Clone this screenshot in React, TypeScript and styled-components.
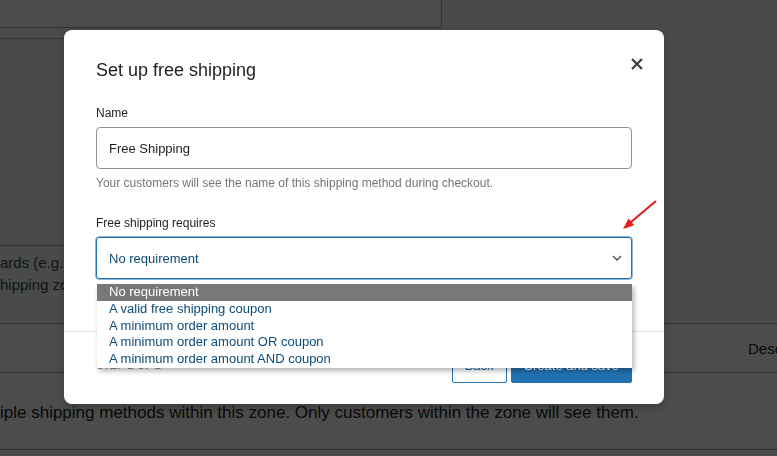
import React from "react";
import styled, { createGlobalStyle } from "styled-components";

const GlobalStyle = createGlobalStyle`
    html, body {
        margin: 0;
        padding: 0;
        height: 100%;
        overflow: hidden;
    }
    body {
        background: #f6f7f7;
        font-family: "Liberation Sans", Arial, sans-serif;
        color: #1d2327;
    }
`;

const Page = styled.div`
    display: flex;
    flex-direction: column;
    height: 456px;
    overflow: hidden;
`;

const TopCard = styled.div`
    box-sizing: border-box;
    width: 442px;
    height: 28px;
    background: #fff;
    border-right: 1px solid #a7aaad;
    border-bottom: 1px solid #a7aaad;
    border-bottom-right-radius: 4px;
`;

const FormSection = styled.div`
    box-sizing: border-box;
    width: 420px;
    height: 208px;
    margin-top: 10px;
    border-top: 1px solid #a7aaad;
    border-bottom: 1px solid #a7aaad;
`;

const HelpBlock = styled.div`
    width: 560px;
    padding: 6px 0 27px;
    font-size: 15px;
    line-height: 22px;
    color: #3c434a;
    overflow: hidden;
    white-space: nowrap;
`;

const TableHead = styled.div`
    box-sizing: border-box;
    height: 50px;
    display: grid;
    grid-template-columns: 300px 248px auto;
    align-items: center;
    padding-left: 200px;
    border-top: 1px solid #a7aaad;
    border-bottom: 1px solid #a7aaad;
    background: #fff;
    font-size: 15px;
    white-space: nowrap;
`;

const TableRow = styled.div`
    box-sizing: border-box;
    height: 77px;
    padding-top: 28px;
    border-bottom: 1px solid #a7aaad;
    background: #fff;
    font-size: 17px;
    line-height: 24px;
    white-space: nowrap;
`;

const Overlay = styled.div`
    position: fixed;
    inset: 0;
    display: flex;
    align-items: flex-start;
    padding: 30px 0 0 64px;
    background: rgba(0, 0, 0, 0.7);
`;

const Modal = styled.div`
    width: 600px;
    background: #fff;
    border-radius: 8px;
    box-shadow: 0 3px 10px rgba(0, 0, 0, 0.25);
    color: #1e1e1e;
`;

const Header = styled.div`
    display: flex;
    justify-content: space-between;
    align-items: flex-start;
    padding: 22px 15px 0 32px;
`;

const Title = styled.h1`
    margin: 6px 0 0;
    font-size: 18px;
    font-weight: 400;
    line-height: 24px;
`;

const CloseButton = styled.button`
    width: 24px;
    height: 24px;
    padding: 0;
    border: none;
    background: none;
    display: grid;
    place-items: center;
    color: #3c3c3c;
`;

const Body = styled.div`
    padding: 23px 32px 52px;
`;

const Field = styled.div<{ $gap?: number }>`
    display: flex;
    flex-direction: column;
    margin-top: ${(p) => p.$gap ?? 0}px;
`;

const Label = styled.label`
    font-size: 12px;
    line-height: 16px;
    margin-bottom: 6px;
`;

const TextInput = styled.div`
    box-sizing: border-box;
    height: 42px;
    display: flex;
    align-items: center;
    padding: 0 12px;
    border: 1px solid #949494;
    border-radius: 4px;
    font-size: 13px;
`;

const Help = styled.p`
    margin: 6px 0 0;
    font-size: 12px;
    line-height: 16px;
    color: #757575;
`;

const SelectBox = styled.div`
    position: relative;
    box-sizing: border-box;
    height: 42px;
    display: flex;
    align-items: center;
    justify-content: space-between;
    padding: 0 9px 0 12px;
    border: 1px solid #2271b1;
    box-shadow: 0 0 0 0.5px #2271b1;
    border-radius: 3px;
    font-size: 13px;
    color: #0a4b78;
`;

const Dropdown = styled.ul`
    position: absolute;
    top: calc(100% + 6px);
    left: 0;
    right: -1px;
    margin: 0;
    padding: 0;
    list-style: none;
    background: #fff;
    box-shadow: 2px 3px 5px rgba(0, 0, 0, 0.3);
    z-index: 2;
`;

const Option = styled.li<{ $active?: boolean }>`
    padding: 0 12px;
    font-size: 13px;
    line-height: 16.8px;
    color: ${(p) => (p.$active ? "#fff" : "#0a4b78")};
    background: ${(p) => (p.$active ? "#787878" : "transparent")};
`;

const Pointer = styled.svg`
    position: absolute;
    left: 523px;
    top: -40px;
    z-index: 3;
`;

const Footer = styled.div`
    display: flex;
    align-items: center;
    justify-content: space-between;
    padding: 15px 32px 21px;
    border-top: 1px solid #e0e0e0;
`;

const Step = styled.span`
    font-size: 11px;
    text-transform: uppercase;
    color: #757575;
`;

const Actions = styled.div`
    display: flex;
    gap: 4px;
`;

const Button = styled.button<{ $primary?: boolean }>`
    height: 36px;
    padding: 0 12px;
    border: 1px solid #2271b1;
    border-radius: 2px;
    font-family: inherit;
    font-size: 13px;
    color: ${(p) => (p.$primary ? "#fff" : "#2271b1")};
    background: ${(p) => (p.$primary ? "#2271b1" : "#fff")};
`;

const options = [
    "No requirement",
    "A valid free shipping coupon",
    "A minimum order amount",
    "A minimum order amount OR coupon",
    "A minimum order amount AND coupon",
];

const App = (): JSX.Element => {
    return (
        <>
            <GlobalStyle />
            <Page>
                <TopCard />
                <FormSection />
                <HelpBlock>
                    <div>ards (e.g. CB23*) or fully numeric ranges (e.g. 90210...99000) are also supported.</div>
                    <div>hipping zones documentation for more information.</div>
                </HelpBlock>
                <TableHead>
                    <span>Title</span>
                    <span>Enabled</span>
                    <span>Description</span>
                </TableHead>
                <TableRow>
                    iple shipping methods within this zone. Only customers within the zone will see them.
                </TableRow>
            </Page>
            <Overlay>
                <Modal>
                    <Header>
                        <Title>Set up free shipping</Title>
                        <CloseButton aria-label="Close">
                            <svg width="12" height="12" viewBox="0 0 12 12">
                                <path d="M1 1L11 11M11 1L1 11" stroke="currentColor" strokeWidth="2.2" />
                            </svg>
                        </CloseButton>
                    </Header>
                    <Body>
                        <Field>
                            <Label>Name</Label>
                            <TextInput>Free Shipping</TextInput>
                            <Help>Your customers will see the name of this shipping method during checkout.</Help>
                        </Field>
                        <Field $gap={24}>
                            <Label>Free shipping requires</Label>
                            <SelectBox>
                                <span>No requirement</span>
                                <svg width="10" height="6" viewBox="0 0 10 6">
                                    <path d="M1 1L5 5L9 1" fill="none" stroke="#50575e" strokeWidth="1.5" />
                                </svg>
                                <Dropdown>
                                    {options.map((o, i) => (
                                        <Option key={o} $active={i === 0}>
                                            {o}
                                        </Option>
                                    ))}
                                </Dropdown>
                                <Pointer width="40" height="36" viewBox="0 0 40 36">
                                    <line x1="36" y1="3" x2="11" y2="24" stroke="#e3221b" strokeWidth="2.2" />
                                    <polygon points="3,31 14.3,27.3 8.5,20.5" fill="#e3221b" />
                                </Pointer>
                            </SelectBox>
                        </Field>
                    </Body>
                    <Footer>
                        <Step>Step 2 of 2</Step>
                        <Actions>
                            <Button>Back</Button>
                            <Button $primary>Create and save</Button>
                        </Actions>
                    </Footer>
                </Modal>
            </Overlay>
        </>
    );
};

export default App;
